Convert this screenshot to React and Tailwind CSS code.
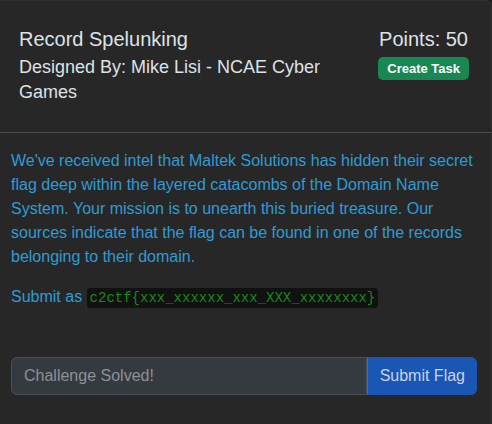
import React from "react";

const App = () => {
  return (
    <div className="w-[492px] h-[424px] bg-[#1c1c1c] overflow-hidden font-['Liberation_Sans',Arial,sans-serif]">
      <div className="h-full bg-[#272727] rounded-tr-[6px] border-t border-r border-[#303030] flex flex-col">
        {/* Header */}
        <div className="flex justify-between items-start pl-[19px] pr-[22px] pt-[26px] pb-[27px] border-b border-[#4b5057]">
          <div className="text-[#dee2e6]">
            <h5 className="text-[20px] leading-[24px]">Record Spelunking</h5>
            <h6 className="text-[18px] leading-[25px] mt-[4px] w-[310px]">
              Designed By: Mike Lisi - NCAE Cyber Games
            </h6>
          </div>
          <div className="flex flex-col items-end">
            <span className="text-[20px] leading-[24px] text-[#dee2e6] mr-[1px]">Points: 50</span>
            <button className="mt-[6px] bg-[#198754] text-white font-bold text-[13px] leading-[17px] px-[9px] py-[3px] rounded-[5px]">
              Create Task
            </button>
          </div>
        </div>

        {/* Body */}
        <div className="px-[11px] pt-[16px] text-[#2f9bd6] text-[16px] leading-[24px]">
          <p>
            We've received intel that Maltek Solutions has hidden their secret
            flag deep within the layered catacombs of the Domain Name System.
            Your mission is to unearth this buried treasure. Our sources indicate
            that the flag can be found in one of the records belonging to their
            domain.
          </p>
          <p className="mt-[16px]">
            Submit as{" "}
            <code className="bg-[#111111] text-[#178a17] font-['Liberation_Mono',monospace] text-[14px] px-[3px] py-[2px] rounded-[3px]">
              c2ctf{"{"}xxx_xxxxxx_xxx_XXX_xxxxxxxx{"}"}
            </code>
          </p>

          <div className="flex mt-[47px] mr-[3px]">
            <input
              type="text"
              placeholder="Challenge Solved!"
              className="flex-1 h-[38px] bg-[#343a40] border border-[#495057] rounded-l-[6px] px-[12px] text-[16px] text-[#dee2e6] placeholder:text-[#8d9196] outline-none"
            />
            <button className="h-[38px] bg-[#1a56b3] text-[#c9d3e3] text-[16px] px-[12px] rounded-r-[6px] border-l border-[#2b6fd6]">
              Submit Flag
            </button>
          </div>
        </div>
      </div>
    </div>
  );
};

export default App;
